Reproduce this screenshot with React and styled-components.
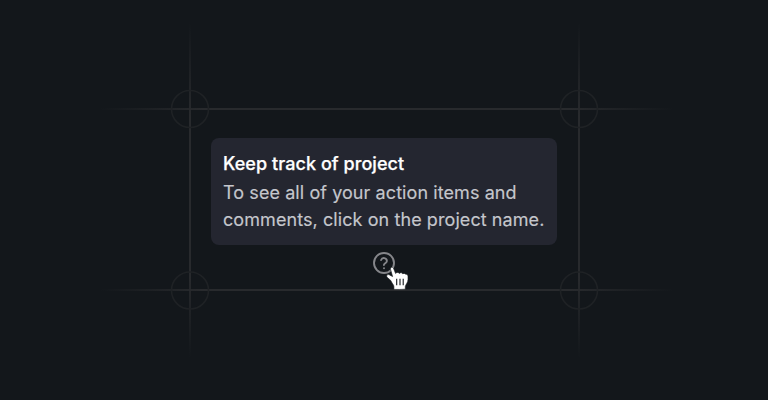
import React from "react";
import styled, { createGlobalStyle } from "styled-components";

const GlobalStyle = createGlobalStyle`
  * { box-sizing: border-box; }
  body { margin: 0; background: #13171b; }
`;

const Stage = styled.main`
  position: relative;
  width: 768px;
  height: 400px;
  overflow: hidden;
  display: flex;
  flex-direction: column;
  align-items: center;
  padding-top: 138px;
  background: #13171b;
  font-family: Inter, "Liberation Sans", sans-serif;
  font-optical-sizing: none;
`;

const Guides = styled.svg`
  position: absolute;
  inset: 0;
`;

const Tooltip = styled.section`
  position: relative;
  width: 346px;
  height: 107px;
  padding: 12px 0 0 12px;
  border-radius: 8px;
  background: #242630;
  white-space: nowrap;
`;

const Title = styled.h1`
  margin: 0;
  font-size: 18px;
  font-weight: 500;
  line-height: 27px;
  letter-spacing: 0.06px;
  color: #fff;
  -webkit-text-stroke: 0.25px #fff;
`;

const Message = styled.p`
  margin: 2px 0 0;
  font-size: 18px;
  font-weight: 400;
  line-height: 27px;
  letter-spacing: 0.08px;
  color: #c5c6cc;
  -webkit-text-stroke: 0.15px #c5c6cc;
`;

const HelpButton = styled.button`
  position: relative;
  width: 24px;
  height: 24px;
  margin-top: 6px;
  padding: 0;
  border: 0;
  background: none;
`;

const HelpIcon = styled.svg`
  display: block;
`;

const Cursor = styled.svg`
  position: absolute;
  left: 14px;
  top: 14px;
`;

const corners = [[190, 109], [579, 109], [190, 290.5], [579, 290.5]];

export default function App() {
  return (
    <>
      <GlobalStyle />
      <Stage>
        <Guides width="768" height="400" aria-hidden="true">
          <defs>
            <linearGradient id="across" gradientUnits="userSpaceOnUse" x1="100" y1="0" x2="674" y2="0">
              <stop offset="0" stopColor="#282a2d" stopOpacity="0" />
              <stop offset=".18" stopColor="#282a2d" />
              <stop offset=".82" stopColor="#282a2d" />
              <stop offset="1" stopColor="#282a2d" stopOpacity="0" />
            </linearGradient>
            <linearGradient id="down" gradientUnits="userSpaceOnUse" x1="0" y1="22" x2="0" y2="358">
              <stop offset="0" stopColor="#282a2d" stopOpacity="0" />
              <stop offset=".28" stopColor="#282a2d" />
              <stop offset=".76" stopColor="#282a2d" />
              <stop offset="1" stopColor="#282a2d" stopOpacity="0" />
            </linearGradient>
          </defs>
          <rect x="100" y="108" width="574" height="2" fill="url(#across)" />
          <rect x="100" y="289" width="574" height="2" fill="url(#across)" />
          <rect x="189" y="22" width="2" height="336" fill="url(#down)" />
          <rect x="578" y="22" width="2" height="336" fill="url(#down)" />
          {corners.map(([x, y]) => (
            <circle key={`${x}-${y}`} cx={x} cy={y} r="18.5" fill="none" stroke="#1f2225" strokeWidth="1.6" />
          ))}
        </Guides>
        <Tooltip role="tooltip">
          <Title>Keep track of project</Title>
          <Message>
            To see all of your action items and
            <br />
            comments, click on the project name.
          </Message>
        </Tooltip>
        <HelpButton aria-label="Help">
          <HelpIcon width="24" height="24" viewBox="0 0 24 24" fill="none" stroke="#85868a" strokeWidth="1.9" strokeLinecap="round" strokeLinejoin="round">
            <circle cx="12" cy="12" r="10" />
            <path d="M9.1 9a3 3 0 0 1 5.8 1c0 2-3 2.4-3 4" />
            <path d="M12 17.2h.01" />
          </HelpIcon>
          <Cursor width="26" height="28" viewBox="0 0 26 28">
            <path
              d="M6.1 18 4.7 15.4 1.1 12.3C-.2 10.6 1.6 8.8 3.6 10L6.6 11.6 4.6 4.6C4 2 6.7 1.4 7.7 3.8L9.6 8.5C10.5 7.1 12.6 7.1 13.3 8.5 14.2 7.3 16.3 7.5 16.9 9 17.6 8.1 19 8.2 19.6 9.3 21 8.8 22 9.9 22 11.6V14.5C22 17.5 19.9 19.1 19.3 21.5V24.2C15.5 24.5 12 24.5 7.9 24.4V21.7C7.9 20.3 6.9 19.4 6.1 18Z"
              fill="#fff" stroke="#13171b" strokeWidth="0.6" strokeLinejoin="round"
            />
            <path d="M10.7 13.7v6.6M14 13.7v6.6M17.2 13.7v6.6" fill="none" stroke="#13171b" strokeWidth="1.1" />
          </Cursor>
        </HelpButton>
      </Stage>
    </>
  );
}
